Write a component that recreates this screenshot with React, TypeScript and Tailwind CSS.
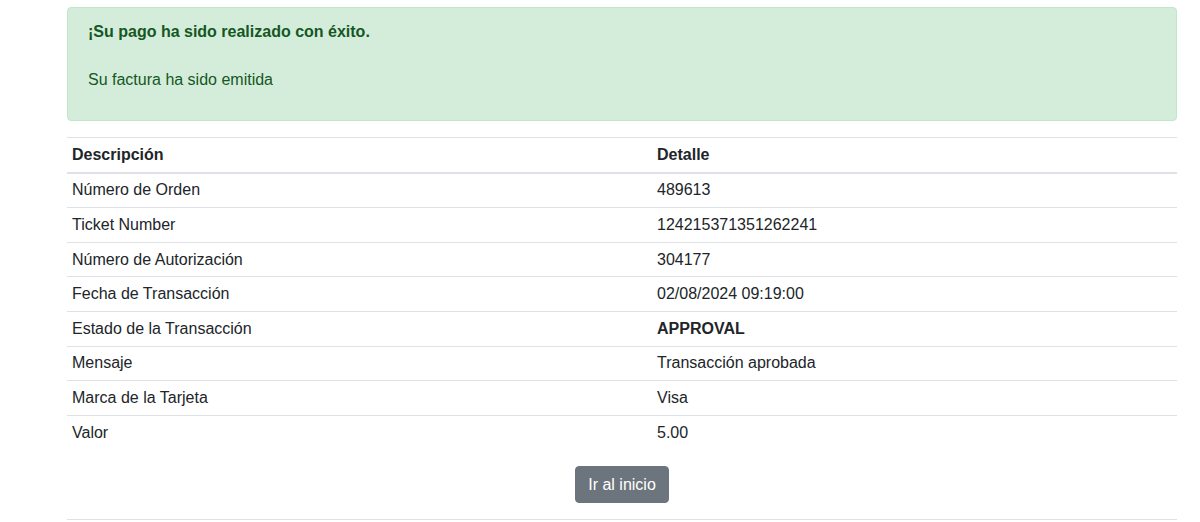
const rows: [string, string, boolean?][] = [
  ["Número de Orden", "489613"],
  ["Ticket Number", "124215371351262241"],
  ["Número de Autorización", "304177"],
  ["Fecha de Transacción", "02/08/2024 09:19:00"],
  ["Estado de la Transacción", "APPROVAL", true],
  ["Mensaje", "Transacción aprobada"],
  ["Marca de la Tarjeta", "Visa"],
  ["Valor", "5.00"],
];

export default function App() {
  return (
    <div
      className="min-h-[522px] bg-white text-[16px] leading-[24px] text-[#212529]"
      style={{ fontFamily: '"Liberation Sans", Arial, sans-serif' }}
    >
      <div className="ml-[67px] w-[1110px] pt-[7px]">
        <div className="mb-4 rounded-[4px] border border-[#c3e6cb] bg-[#d4edda] px-5 py-3 text-[#155724]">
          <p className="mb-4">
            <strong>¡Su pago ha sido realizado con éxito.</strong>
            <br />
            <br />
            Su factura ha sido emitida
          </p>
        </div>

        <table className="w-full border-collapse">
          <thead>
            <tr>
              <th className="w-[585px] border-t border-b-2 border-[#dee2e6] px-[5px] py-[4.8px] text-left font-bold">
                Descripción
              </th>
              <th className="border-t border-b-2 border-[#dee2e6] px-[5px] py-[4.8px] text-left font-bold">
                Detalle
              </th>
            </tr>
          </thead>
          <tbody>
            {rows.map(([label, value, bold]) => (
              <tr key={label}>
                <td className="border-t border-[#dee2e6] px-[5px] py-[4.8px]">{label}</td>
                <td className={`border-t border-[#dee2e6] px-[5px] py-[4.8px] ${bold ? "font-bold" : ""}`}>
                  {value}
                </td>
              </tr>
            ))}
          </tbody>
        </table>

        <div className="flex justify-center border-b border-[#dee2e6] pt-[17px] pb-4">
          <button className="rounded-[4px] border border-[#6c757d] bg-[#6c757d] px-3 py-[5.5px] text-white">
            Ir al inicio
          </button>
        </div>
      </div>
    </div>
  );
}
